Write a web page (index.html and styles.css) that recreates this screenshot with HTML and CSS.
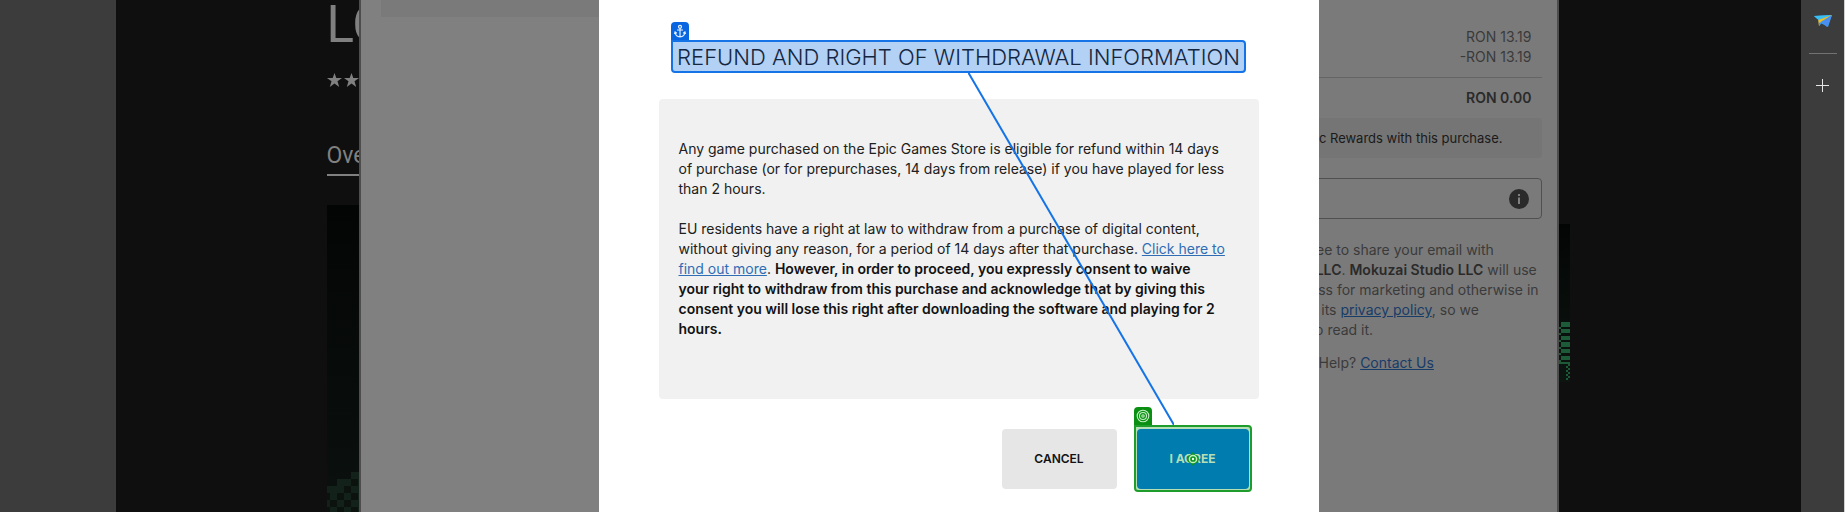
FILE: index.html
```html
<!DOCTYPE html>
<html lang="en">
<head>
<meta charset="utf-8">
<title>Refund and right of withdrawal information</title>
<link rel="stylesheet" href="styles.css">
</head>
<body>
<div class="gutter"></div>
<main class="stage">
  <div class="store">
    <section class="product">
      <h1 class="product-title">LO</h1>
      <svg class="stars" viewBox="0 0 32 14" aria-hidden="true">
        <path d="M7.5 0l1.8 5H15l-4.500 3.300L12.200 14 7.500 10.600 2.800 14l1.700-5.700L0 5h5.700z"/>
        <path d="M24.500 0l1.800 5H32l-4.500 3.300L29.200 14l-4.700-3.400-4.700 3.400 1.700-5.700L17 5h5.700z"/>
      </svg>
      <div class="tabs"><a class="tab" href="#">Overview</a></div>
      <div class="art">
        <svg class="art-pixels" viewBox="0 0 34 40" aria-hidden="true">
          <path d="M0 14h10V7h14V0h10v40H0z" fill="#12211a"/>
          <path d="M17 14h7v7h-7zM24 7h7v7h-7zM10 21h7v7h-7zM24 21h7v7h-7zM3 28h7v7H3zM17 28h7v7h-7zM10 35h7v5h-7zM24 35h7v5h-7zM0 21h3v7H0zM0 35h3v5H0z" fill="#0c130f"/>
        </svg>
      </div>
    </section>
    <div class="thumb">
      <svg class="thumb-pixels" viewBox="0 0 11 60" aria-hidden="true">
        <path d="M2 0h9v5H2zM2 7h9v4H2zM2 14h9v4H2zM2 20h9v5H2zM2 27h9v4H2zM2 34h9v4H2zM0 40h11v2H0zM0 5h2v2H0zM0 11h2v2H0zM0 18h2v2H0zM0 25h2v2H0zM0 31h2v2H0zM0 38h2v2H0zM9 42h2v2H9zM7 44h2v2H7zM9 46h2v2H9zM7 48h2v2H7zM9 50h2v2H9zM7 52h2v2H7zM9 54h2v2H9zM7 56h2v2H7z" fill="#1d5a38"/>
      </svg>
    </div>
  </div>

  <div class="checkout">
    <div class="payment"><div class="payment-box"></div></div>
    <aside class="summary">
      <div class="prices">
        <span>RON 13.19</span>
        <span>-RON 13.19</span>
      </div>
      <strong class="total">RON 0.00</strong>
      <p class="rewards">Earn Epic Rewards with this purchase.</p>
      <div class="code">
        <input class="code-input" type="text" aria-label="Creator code">
        <svg class="info" viewBox="0 0 20 20" aria-hidden="true"><circle cx="10" cy="10" r="10" fill="#2a2a2a"/><path d="M9 8.500h2V15H9zM9 5h2v2H9z" fill="#808080"/></svg>
      </div>
      <p class="share">Click here to agree to share your email with<br><b>Mokuzai Studio LLC</b>. <b>Mokuzai Studio LLC</b> will use<br>your email address for marketing and otherwise in<br>accordance with its <a href="#">privacy policy</a>, so we<br>encourage you to read it.</p>
      <p class="help">Need Help? <a href="#">Contact Us</a></p>
    </aside>
  </div>

  <div class="modal" role="dialog" aria-labelledby="modal-title">
    <h2 class="modal-title" id="modal-title">REFUND AND RIGHT OF WITHDRAWAL INFORMATION
      <svg class="tag tag-anchor" viewBox="0 0 18 18" aria-hidden="true"><path d="M0 18V4a4 4 0 0 1 4-4h10a4 4 0 0 1 4 4v14z" fill="#0a66e0"/><g fill="none" stroke="#e8f2ff" stroke-width="1.200"><circle cx="9" cy="4.800" r="1.500"/><path d="M9 6.300v8.500M6 8h6M4 10.300c.3 2.700 2.300 4.500 5 4.500s4.700-1.800 5-4.500M3.500 12l.6-2 1.700 1.200M14.500 12l-.6-2-1.700 1.200"/></g></svg>
    </h2>
    <div class="notice">
      <p>Any game purchased on the Epic Games Store is eligible for refund within 14 days<br>of purchase (or for prepurchases, 14 days from release) if you have played for less<br>than 2 hours.</p>
      <p>EU residents have a right at law to withdraw from a purchase of digital content,<br>without giving any reason, for a period of 14 days after that purchase. <a href="#">Click here to<br>find out more</a>. <b>However, in order to proceed, you expressly consent to waive<br>your right to withdraw from this purchase and acknowledge that by giving this<br>consent you will lose this right after downloading the software and playing for 2<br>hours.</b></p>
    </div>
    <div class="actions">
      <button class="button cancel" type="button">CANCEL</button>
      <div class="target">
        <button class="button agree" type="button">I AGREE</button>
        <svg class="tag tag-target" viewBox="0 0 18 18" aria-hidden="true"><path d="M0 18V4a4 4 0 0 1 4-4h10a4 4 0 0 1 4 4v14z" fill="#0a8f12"/><g fill="none" stroke="#c4f0c4" stroke-width="1.100"><circle cx="9" cy="9" r="5.800"/><circle cx="9" cy="9" r="3.500"/><circle cx="9" cy="9" r="1.200"/></g></svg>
        <svg class="cross" viewBox="0 0 14 14" aria-hidden="true"><path d="M7 0l2 2.500L12 4l1 3-1 3-3 1.500L7 14l-2-2.500L2 10 1 7l1-3 3-1.500z" fill="#0f9420"/><circle cx="7" cy="7" r="3.600" fill="none" stroke="#c4f0c4" stroke-width="1.500"/><circle cx="7" cy="7" r="1.200" fill="#e6ffe6"/></svg>
      </div>
    </div>
    <svg class="connector" viewBox="0 0 206 353" aria-hidden="true"><path d="M0 0L206 353" stroke="#1473e6" stroke-width="2"/></svg>
  </div>
</main>
<nav class="sidebar" aria-label="Sidebar">
  <button class="side-button" type="button" aria-label="Send">
    <svg viewBox="0 0 18 12"><path d="M0 1L18 0 14 12 7.500 8.500 5 11 4.500 5z" fill="#3b9df2"/><path d="M0 1l18-1L4.500 5z" fill="#38c0f5"/><path d="M18 0L4.300 5 5 11l1.500-4z" fill="#f5bd1c"/><path d="M4.800 8l.2 3 1.300-3.500z" fill="#c66c10"/><path d="M18 0L8 7l5 5z" fill="#4b8df0"/></svg>
  </button>
  <hr class="side-rule">
  <button class="side-button" type="button" aria-label="Add">
    <svg viewBox="0 0 18 18" class="plus"><path d="M8.500 2v13M2 8.500h13" stroke="#e6e6e6"/></svg>
  </button>
</nav>
</body>
</html>
```
FILE: styles.css
```css
* { box-sizing: border-box; }

body {
  margin: 0;
  display: flex;
  height: 100vh;
  overflow: hidden;
  background: #3c3c3c;
  font: 14px/20px Inter, "Liberation Sans", sans-serif;
}

p, h1, h2 { margin: 0; font-weight: inherit; }

button { font: inherit; border: 0; padding: 0; cursor: pointer; }

.gutter { flex: 0 0 116px; }

.stage {
  position: relative;
  flex: 1;
  overflow: hidden;
  background: #0f0f0f;
}

/* Store page behind the checkout */
.store {
  display: flex;
  justify-content: space-between;
  width: 1264px;
  height: 100%;
  margin: 0 auto;
}

.product {
  display: flex;
  flex-direction: column;
  width: 900px;
  color: #808080;
}

.product-title { font: 51px/50px Roboto, sans-serif; }

.stars { width: 32px; height: 14px; margin-top: 23px; fill: #808080; }

.tabs { margin-top: 55px; }

.tab {
  display: inline-block;
  padding-bottom: 4px;
  border-bottom: 2px solid #808080;
  color: #808080;
  font: 23px/28px Roboto, sans-serif;
  text-decoration: none;
}

.art {
  display: flex;
  align-items: flex-end;
  flex: 1;
  margin-top: 29px;
  background: linear-gradient(#030504, #0b110f);
}

.art-pixels { width: 34px; height: 40px; }

.thumb {
  display: flex;
  flex-direction: column;
  justify-content: flex-end;
  align-items: flex-end;
  width: 200px;
  height: 158px;
  margin: 224px 21px 0 0;
  background: linear-gradient(#030504, #0d1511);
}

.thumb-pixels { width: 11px; height: 60px; }

/* Checkout window */
.checkout {
  position: absolute;
  inset: 0 0 0 50%;
  width: 1200px;
  margin-left: -600px;
  display: flex;
  border: solid #4d4d4d;
  border-width: 0 2px;
  background: #808080;
}

.payment { flex: 1; padding: 0 20px; }

.payment-box { height: 17px; background: #7a7a7a; }

.summary {
  display: flex;
  flex-direction: column;
  width: 400px;
  padding: 27px 15px 0;
  background: #7a7a7a;
  color: #3a3a3a;
}

.summary a { color: #173c68; }

.summary b { color: #2a2a2a; font-weight: 600; }

.prices {
  display: flex;
  flex-direction: column;
  align-items: flex-end;
  padding: 0 10px 10px;
  border-bottom: 1px solid #656565;
}

.total {
  padding: 10px 10px 0;
  color: #2a2a2a;
  font-weight: 600;
  text-align: right;
}

.rewards {
  margin-top: 10px;
  padding: 10px 39px;
  border-radius: 4px;
  background: #757575;
  color: #1a1a1a;
  font-size: 13px;
  text-align: right;
}

.code {
  display: flex;
  align-items: center;
  height: 41px;
  margin-top: 20px;
  padding-right: 12px;
  border: 1px solid #505050;
  border-radius: 4px;
}

.code-input { flex: 1; border: 0; background: none; outline: 0; }

.info { width: 20px; height: 20px; }

.share { margin: 21px 0 0 36px; white-space: nowrap; }

.help { margin-top: 13px; text-align: center; }

/* Refund dialog */
.modal {
  position: absolute;
  inset: 0 0 0 50%;
  display: flex;
  flex-direction: column;
  width: 720px;
  margin-left: -360px;
  padding: 40px 60px;
  background: #fff;
  color: #202020;
}

.modal-title {
  position: relative;
  align-self: center;
  padding: 1px 4px 0;
  border: 2px solid #1473e6;
  border-radius: 4px;
  border-top-left-radius: 0;
  background: #b2d1f5;
  color: #14263f;
  font-size: 22px;
  font-weight: 300;
  line-height: 28px;
  white-space: nowrap;
}

.tag { position: absolute; width: 18px; height: 18px; }

.tag-anchor { left: -2px; top: -20px; }

.notice {
  display: flex;
  flex-direction: column;
  gap: 20px;
  min-height: 300px;
  margin-top: 26px;
  padding: 40px 20px;
  border-radius: 4px;
  background: #f1f1f1;
  white-space: nowrap;
}

.notice a { color: #2f6db5; }

.notice b { color: #121212; font-weight: 600; }

.actions {
  display: flex;
  justify-content: flex-end;
  gap: 17px;
  margin-top: 26px;
  padding-right: 7px;
}

.button {
  height: 60px;
  border-radius: 4px;
  font-size: 12px;
  font-weight: 600;
}

.cancel {
  width: 115px;
  margin-top: 4px;
  background: #e6e6e6;
  color: #121212;
}

.target {
  position: relative;
  padding: 2px 1px 1px;
  border: 2px solid #1f9d2c;
  border-radius: 4px;
  border-top-left-radius: 0;
  background: #b5dfb5;
}

.agree {
  display: block;
  width: 112px;
  background: #007cae;
  color: #b5dfb5;
  font-weight: 700;
}

.tag-target { left: -2px; top: -20px; }

.cross {
  position: absolute;
  left: 50%;
  top: 50%;
  width: 14px;
  height: 14px;
  margin: -7px;
}

.connector {
  position: absolute;
  left: 369px;
  top: 72px;
  width: 206px;
  height: 353px;
  pointer-events: none;
}

/* Browser sidebar */
.sidebar {
  display: flex;
  flex-direction: column;
  align-items: center;
  flex: 0 0 44px;
  padding-top: 12px;
  border-right: 1px solid #d0d0d0;
}

.side-button {
  display: grid;
  place-items: center;
  width: 18px;
  height: 18px;
  background: none;
}

.side-button svg { width: 18px; }

.side-rule {
  width: 28px;
  height: 1px;
  margin: 23px 0;
  border: 0;
  background: #727272;
}
```
